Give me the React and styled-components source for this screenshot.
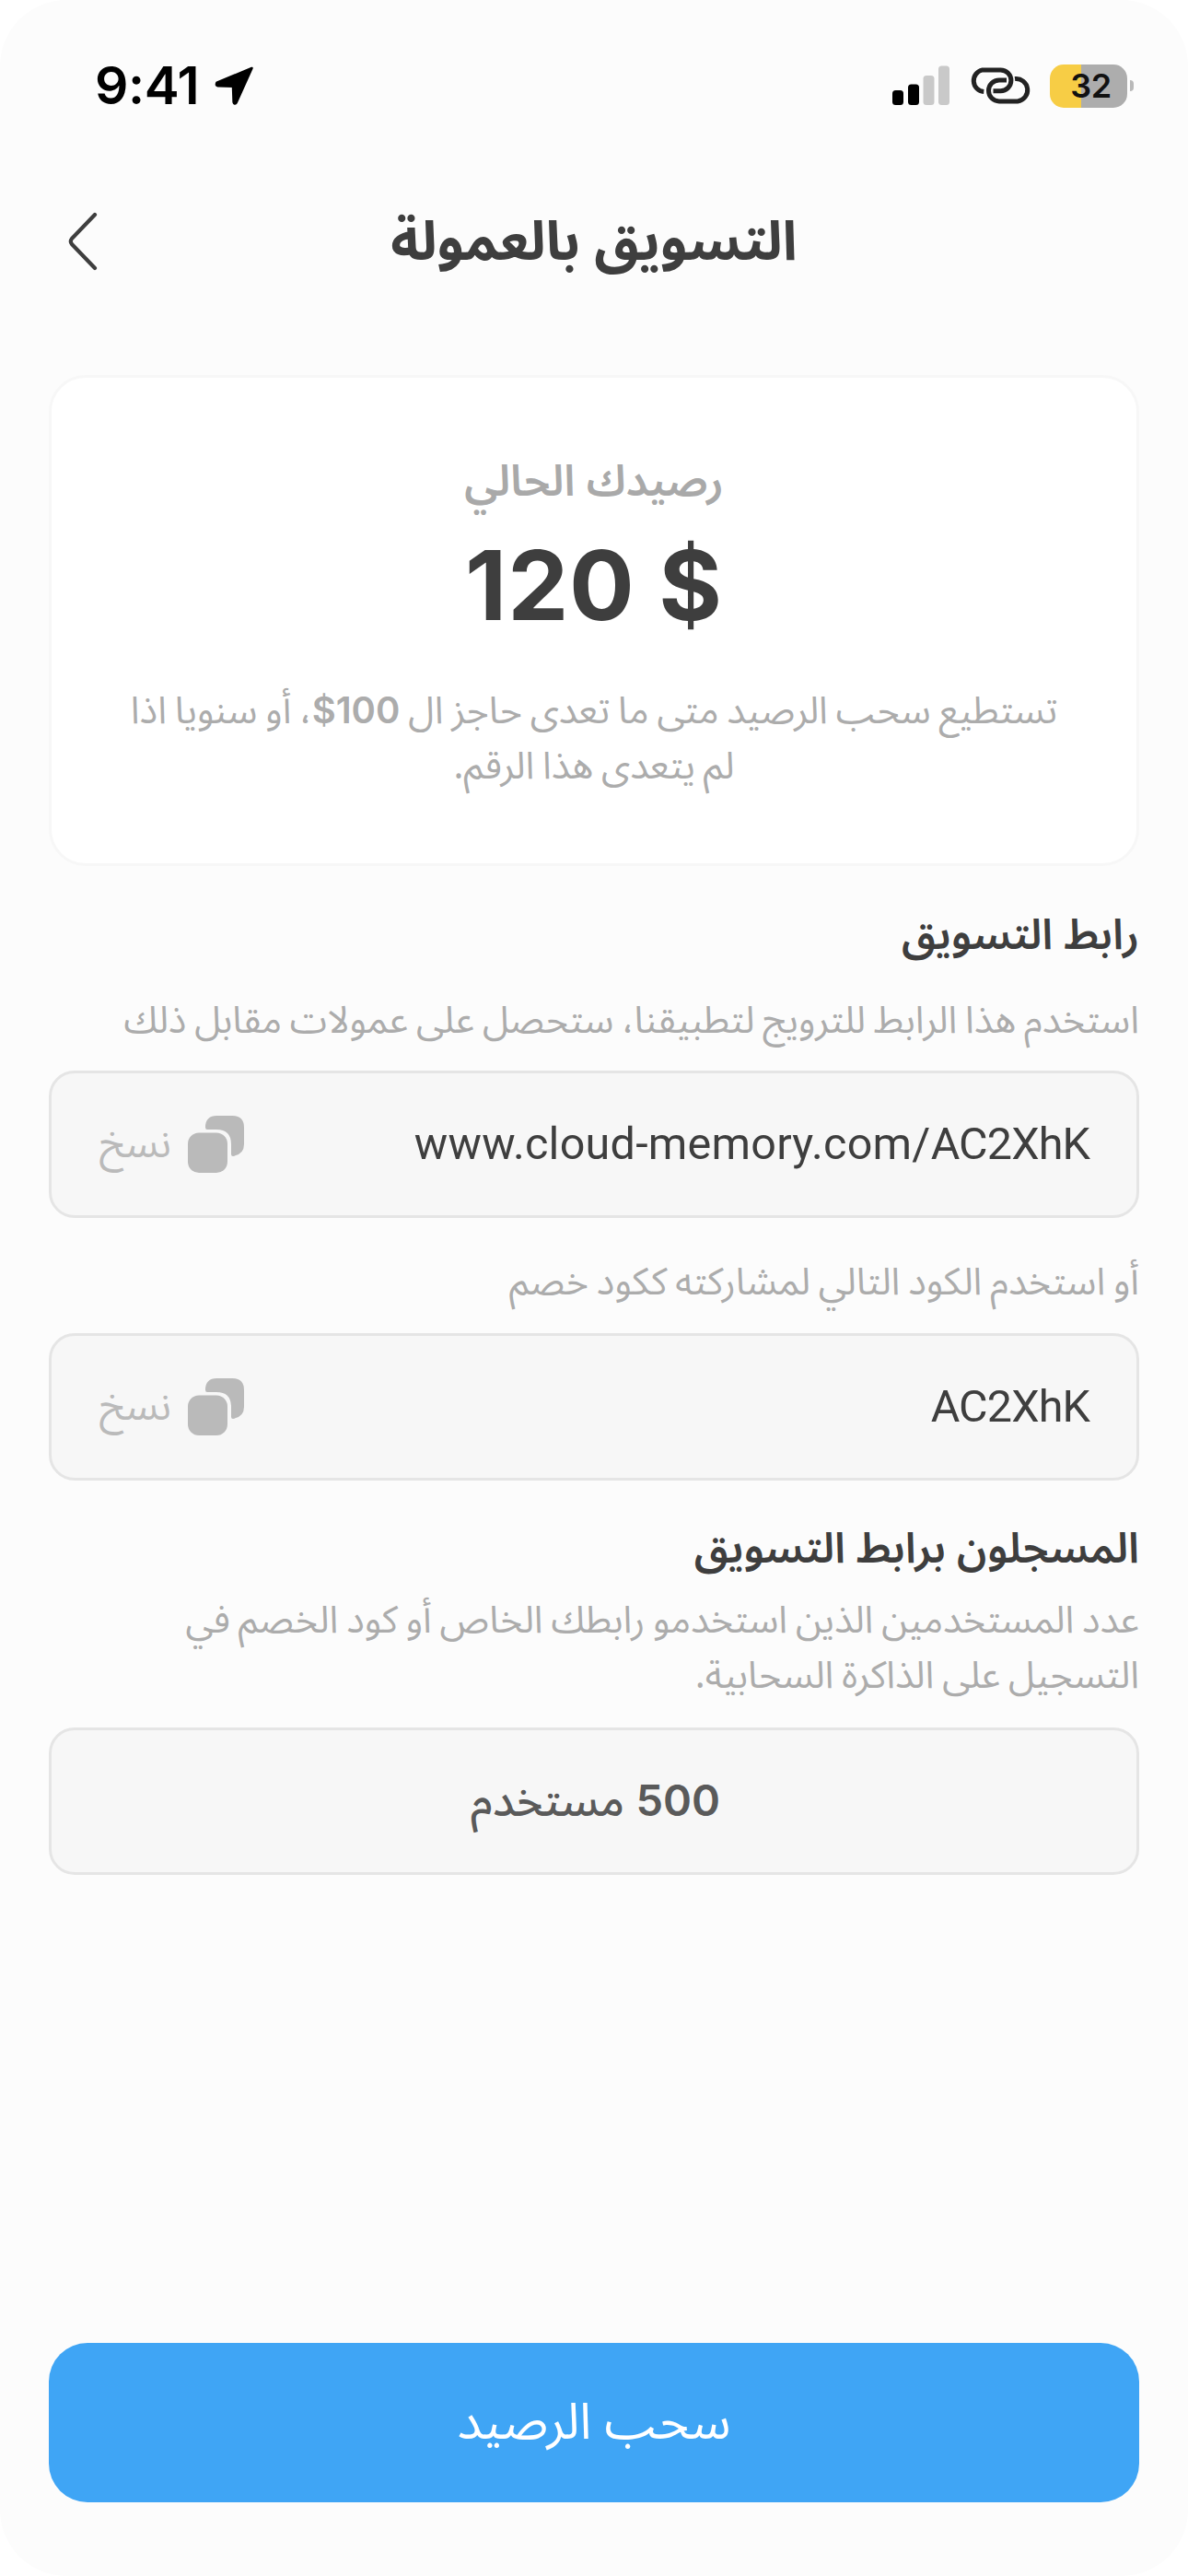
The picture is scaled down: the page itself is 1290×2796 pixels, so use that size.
import React from 'react';
import styled, { createGlobalStyle } from 'styled-components';

const arabic = '"Noto Sans Arabic", "DejaVu Sans", sans-serif';
const latin = 'Inter, "Liberation Sans", sans-serif';

const GlobalStyle = createGlobalStyle`
  * { box-sizing: border-box; }
  body { margin: 0; background: #fff; }
`;

const Screen = styled.main`
  display: flex;
  flex-direction: column;
  width: 1290px;
  height: 2796px;
  padding: 0 53px 80px;
  border-radius: 72px;
  background: #fcfcfc;
  color: #3e3e3e;
  font-family: ${arabic};
`;

const StatusBar = styled.div`
  display: flex;
  align-items: center;
  justify-content: space-between;
  height: 186px;
  padding: 0 6px 0 50px;
`;

const StatusGroup = styled.div`
  display: flex;
  align-items: center;
  gap: ${p => p.$gap}px;
`;

const Time = styled.span`
  color: #000;
  font: 600 57px/70px ${latin};
  letter-spacing: -0.4px;
`;

const Battery = styled.div`
  display: flex;
  align-items: center;
  gap: 3px;
`;

const BatteryBody = styled.div`
  width: 84px;
  height: 47px;
  padding-left: 5px;
  border-radius: 15px;
  background: linear-gradient(90deg, #f7cd45 ${p => p.$level}%, #adadad ${p => p.$level}%);
  color: #111;
  font: 600 36px/47px ${latin};
  letter-spacing: -0.5px;
  text-align: center;
`;

const BatteryNub = styled.div`
  width: 4px;
  height: 12px;
  border-radius: 0 4px 4px 0;
  background: #b9b9b9;
`;

const Header = styled.header`
  display: grid;
  grid-template-columns: 54px 1fr 54px;
  align-items: center;
  height: 152px;
  margin-bottom: 69px;
`;

const BackButton = styled.button`
  display: flex;
  justify-content: flex-end;
  padding: 0;
  border: 0;
  background: none;
`;

const Title = styled.h1`
  margin: 0;
  padding-top: 3px;
  font-size: 59px;
  font-weight: 700;
  line-height: 92px;
  text-align: center;
`;

const BalanceCard = styled.section`
  display: flex;
  flex-direction: column;
  align-items: center;
  height: 533px;
  padding: 76px 60px 0;
  border: 3px solid #f7f7f7;
  border-radius: 40px;
  background: #fff;
  text-align: center;
`;

const BalanceLabel = styled.p`
  margin: 0;
  color: #a9a9a9;
  font-size: 47px;
  font-weight: 600;
  line-height: 74px;
`;

const Amount = styled.p`
  margin: 0 0 31px;
  font: 650 105px/150px ${latin};
  letter-spacing: 0.8px;
`;

const Note = styled.p`
  margin: ${p => p.$top || 0}px 0 0;
  color: #acacac;
  font-size: 41px;
  line-height: 60px;
  word-spacing: -1.8px;
`;

const SectionTitle = styled.h2`
  margin: ${p => p.$top}px 0 ${p => p.$bottom}px;
  font-size: 46px;
  font-weight: 600;
  line-height: 72px;
`;

const Field = styled.div`
  display: flex;
  align-items: center;
  justify-content: ${p => (p.$centered ? 'center' : 'space-between')};
  height: 160px;
  margin-top: ${p => p.$top}px;
  padding: 0 51px 0 52px;
  border: 3px solid #e5e5e5;
  border-radius: 28px;
  background: #f7f7f7;
`;

const FieldValue = styled.span`
  color: #3e3e3e;
  font: 400 48.5px/62px Roboto, "Liberation Sans", sans-serif;
  letter-spacing: 0.25px;
`;

const Code = styled.span`
  letter-spacing: -0.9px;
`;

const CopyButton = styled.button`
  display: flex;
  align-items: center;
  gap: 18px;
  padding: 0;
  border: 0;
  background: none;
  color: #bababa;
  font: 400 44px/60px ${arabic};
`;

const Count = styled.span`
  padding-left: 2px;
  color: #5a5a5a;
  font-size: 47.5px;
  font-weight: 550;
  line-height: 60px;
`;

const Number = styled.span`
  font-family: ${latin};
  font-size: ${p => p.$size}px;
  font-weight: ${p => p.$weight};
`;

const Spacer = styled.div`
  flex: 1;
`;

const PrimaryButton = styled.button`
  height: 173px;
  padding: 0;
  border: 0;
  border-radius: 42px;
  background: #3fa5f5;
  color: #fff;
  font: 400 54.5px/80px ${arabic};
`;

const LocationArrow = () => (
  <svg width="43" height="43" viewBox="0 0 43 43">
    <path d="M40.5 2 2.5 17.6Q1 21 3.5 21.3L20 21.8 20.6 38.8Q21.5 42 23.6 39.5Z" fill="#000" stroke="#000" strokeWidth="2.5" strokeLinejoin="round" />
  </svg>
);

const Signal = () => (
  <svg width="64" height="44" viewBox="0 0 64 44">
    <rect x="1" y="27" width="12" height="16" rx="3.5" fill="#000" />
    <rect x="18" y="20.5" width="12" height="22.5" rx="3.5" fill="#000" />
    <rect x="34.5" y="11" width="12" height="32" rx="3.5" fill="#c9c9c9" />
    <rect x="51" y="0.5" width="12" height="42.5" rx="3.5" fill="#c9c9c9" />
  </svg>
);

const LinkIcon = () => (
  <svg width="66" height="40" viewBox="0 0 66 40" fill="none" stroke="#222" strokeWidth="5">
    <path d="M15.3 26.6A12 12 0 0 1 13.8 2.9H33.5A11.4 11.4 0 0 1 33.5 25.7H25.5" />
    <path d="M49 12.6A12 12 0 0 1 52 36.9H32A11.4 11.4 0 0 1 32 13.9H40" />
  </svg>
);

const BackIcon = () => (
  <svg width="34" height="64" viewBox="0 0 34 64" fill="none" stroke="#3e3e3e" strokeWidth="4.2" strokeLinecap="round" strokeLinejoin="round">
    <path d="M30 3 5 29Q2.6 32 5 35L30 61" />
  </svg>
);

const CopyIcon = () => (
  <svg width="61" height="62" viewBox="0 0 61 62" fill="#bababa">
    <path d="M19 12.5Q19 0 31.5 0H48Q61 0 61 13V31Q61 42 49 44Q47 44 47 42V31Q47 15 31 15H21Q19 15 19 12.5Z" />
    <rect x="0" y="18.5" width="43" height="43.5" rx="12" />
  </svg>
);

const CopyField = ({ host, code, top }) => (
  <Field $top={top}>
    <FieldValue dir="ltr">{host}<Code>{code}</Code></FieldValue>
    <CopyButton dir="rtl"><CopyIcon />نسخ</CopyButton>
  </Field>
);

export default function App() {
  return (
    <>
      <GlobalStyle />
      <Screen dir="rtl">
        <StatusBar dir="ltr">
          <StatusGroup $gap={17}>
            <Time>9:41</Time>
            <LocationArrow />
          </StatusGroup>
          <StatusGroup $gap={21}>
            <Signal />
            <LinkIcon />
            <Battery>
              <BatteryBody $level={40}>32</BatteryBody>
              <BatteryNub />
            </Battery>
          </StatusGroup>
        </StatusBar>

        <Header dir="ltr">
          <BackButton aria-label="رجوع"><BackIcon /></BackButton>
          <Title dir="rtl">التسويق بالعمولة</Title>
        </Header>

        <BalanceCard>
          <BalanceLabel>رصيدك الحالي</BalanceLabel>
          <Amount dir="ltr">120 $</Amount>
          <Note>
            تستطيع سحب الرصيد متى ما تعدى حاجز ال <Number dir="ltr" $size={40} $weight={600}>$100</Number>، أو سنويا اذا
            <br />
            لم يتعدى هذا الرقم.
          </Note>
        </BalanceCard>

        <SectionTitle $top={40} $bottom={26}>رابط التسويق</SectionTitle>
        <Note>استخدم هذا الرابط للترويج لتطبيقنا، ستحصل على عمولات مقابل ذلك</Note>
        <CopyField top={24} host="www.cloud-memory.com/" code="AC2XhK" />
        <Note $top={40}>أو استخدم الكود التالي لمشاركته ككود خصم</Note>
        <CopyField top={25} code="AC2XhK" />

        <SectionTitle $top={39} $bottom={11}>المسجلون برابط التسويق</SectionTitle>
        <Note>
          عدد المستخدمين الذين استخدمو رابطك الخاص أو كود الخصم في
          <br />
          التسجيل على الذاكرة السحابية.
        </Note>
        <Field $centered $top={26}>
          <Count><Number $size={47} $weight={600}>500</Number> مستخدم</Count>
        </Field>
        <Spacer />
        <PrimaryButton>سحب الرصيد</PrimaryButton>
      </Screen>
    </>
  );
}
